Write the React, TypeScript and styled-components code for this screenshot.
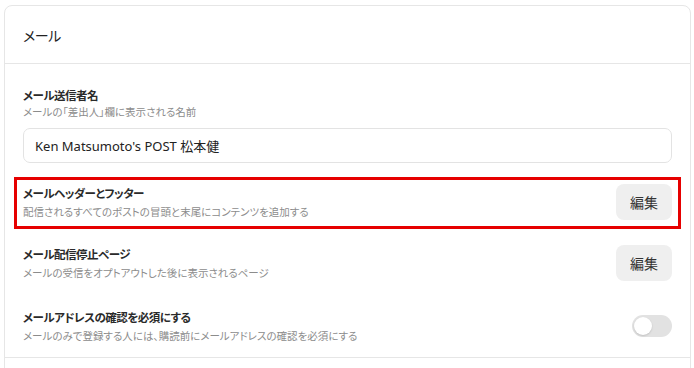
import React, { useState } from 'react'
import styled, { createGlobalStyle } from 'styled-components'

const GlobalStyle = createGlobalStyle`
  html, body {
    margin: 0;
    padding: 0;
    background: #ffffff;
  }
  body {
    font-family: Inter, "Noto Sans CJK JP", sans-serif;
    color: #222222;
    font-feature-settings: "palt";
  }
  * {
    box-sizing: border-box;
  }
`

const Page = styled.div`
  padding: 5px 3px 0 4px;
`

const Card = styled.section`
  border: 1px solid #e6e6e6;
  border-radius: 8px;
  background: #fff;
  overflow: hidden;
`

const CardHeader = styled.header`
  height: 58px;
  display: flex;
  align-items: center;
  padding: 0 18px;
  border-bottom: 1px solid #e6e6e6;
  font-family: "Noto Sans CJK JP", sans-serif;
  font-size: 14px;
  font-weight: 400;
  letter-spacing: -0.4px;
  color: #222;
`

const CardBody = styled.div`
  display: flex;
  flex-direction: column;
  padding: 22px 18px 13px;
  border-bottom: 1px solid #e6e6e6;
`

const NextSection = styled.div`
  height: 40px;
`

const TextBlock = styled.div<{ $gap?: number }>`
  display: flex;
  flex-direction: column;
  gap: ${(p) => p.$gap ?? 0}px;
`

const Label = styled.div`
  font-family: "Noto Sans CJK JP", sans-serif;
  font-size: 11.5px;
  font-weight: 700;
  line-height: 18px;
  letter-spacing: -0.5px;
  color: #2a2a2a;
`

const Desc = styled.div`
  font-family: "Noto Sans CJK JP", sans-serif;
  font-size: 10.5px;
  line-height: 16px;
  color: #8c8c8c;
`

const TextInput = styled.input`
  margin-top: 8px;
  height: 35px;
  width: 100%;
  border: 1px solid #e3e3e3;
  border-radius: 7px;
  padding: 0 11px;
  font-family: "Noto Sans", "Noto Sans CJK JP", sans-serif;
  font-size: 13px;
  color: #222;
  outline: none;
  background: #fff;
`

const Highlight = styled.div`
  margin: 14px -9px 0;
  border: 3px solid #e60000;
  padding: 4px 6px 6px;
`

const Row = styled.div<{ $gap?: number; $height?: number }>`
  display: flex;
  align-items: center;
  justify-content: space-between;
  min-height: ${(p) => p.$height ?? 36}px;
  margin-top: ${(p) => p.$gap ?? 0}px;
`

const EditButton = styled.button`
  width: 56px;
  height: 36px;
  border: none;
  border-radius: 8px;
  background: #efefef;
  font-family: "Noto Sans CJK JP", sans-serif;
  font-size: 14px;
  font-weight: 400;
  color: #333;
  cursor: pointer;
  padding: 0;
`

const Toggle = styled.button<{ $on: boolean }>`
  position: relative;
  width: 40px;
  height: 22px;
  border: none;
  border-radius: 11px;
  background: ${(p) => (p.$on ? '#30cf43' : '#e2e2e2')};
  padding: 0;
  cursor: pointer;
  &::after {
    content: '';
    position: absolute;
    top: 2px;
    left: ${(p) => (p.$on ? '20px' : '2px')};
    width: 18px;
    height: 18px;
    border-radius: 50%;
    background: #fff;
    box-shadow: 0 1px 2px rgba(0, 0, 0, 0.15);
  }
`

const App = () => {
  const [name, setName] = useState("Ken Matsumoto's POST 松本健")
  const [verify, setVerify] = useState(false)

  return (
    <Page>
      <GlobalStyle />
      <Card>
        <CardHeader>メール</CardHeader>
        <CardBody>
          <TextBlock>
            <Label>メール送信者名</Label>
            <Desc>メールの「差出人」欄に表示される名前</Desc>
          </TextBlock>
          <TextInput value={name} onChange={(e) => setName(e.target.value)} />

          <Highlight>
            <Row>
              <TextBlock $gap={2}>
                <Label>メールヘッダーとフッター</Label>
                <Desc>配信されるすべてのポストの冒頭と末尾にコンテンツを追加する</Desc>
              </TextBlock>
              <EditButton>編集</EditButton>
            </Row>
          </Highlight>

          <Row $gap={16}>
            <TextBlock $gap={2}>
              <Label>メール配信停止ページ</Label>
              <Desc>メールの受信をオプトアウトした後に表示されるページ</Desc>
            </TextBlock>
            <EditButton>編集</EditButton>
          </Row>

          <Row $gap={27} $height={36}>
            <TextBlock $gap={2}>
              <Label>メールアドレスの確認を必須にする</Label>
              <Desc>メールのみで登録する人には、購読前にメールアドレスの確認を必須にする</Desc>
            </TextBlock>
            <Toggle $on={verify} onClick={() => setVerify((v) => !v)} />
          </Row>
        </CardBody>
        <NextSection />
      </Card>
    </Page>
  )
}

export default App
